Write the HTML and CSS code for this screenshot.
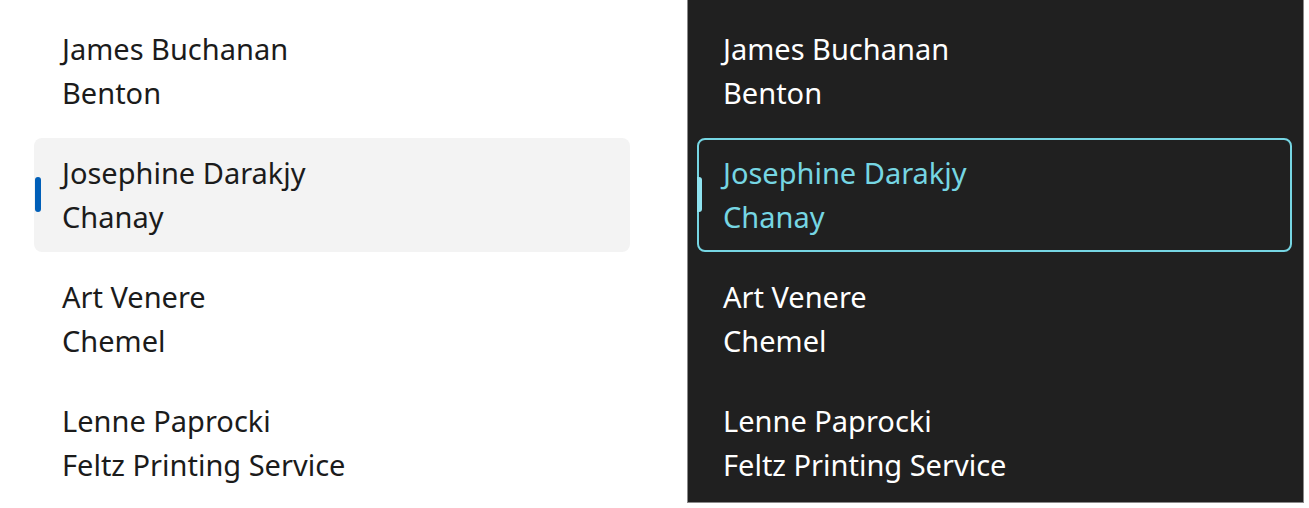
FILE: index.html
```html
<!DOCTYPE html>
<html>
<head>
<meta charset="utf-8">
<link rel="stylesheet" href="styles.css">
</head>
<body>
<div class="page">
  <div class="panel light">
    <div class="item"><div class="line">James Buchanan</div><div class="line">Benton</div></div>
    <div class="item selected"><span class="bar"></span><div class="line">Josephine Darakjy</div><div class="line">Chanay</div></div>
    <div class="item"><div class="line">Art Venere</div><div class="line">Chemel</div></div>
    <div class="item"><div class="line">Lenne Paprocki</div><div class="line">Feltz Printing Service</div></div>
  </div>
  <div class="panel dark">
    <div class="item"><div class="line">James Buchanan</div><div class="line">Benton</div></div>
    <div class="item selected"><span class="bar"></span><div class="line">Josephine Darakjy</div><div class="line">Chanay</div></div>
    <div class="item"><div class="line">Art Venere</div><div class="line">Chemel</div></div>
    <div class="item"><div class="line">Lenne Paprocki</div><div class="line">Feltz Printing Service</div></div>
  </div>
</div>
</body>
</html>
```
FILE: styles.css
```css
html, body {
  margin: 0;
  padding: 0;
  background: #ffffff;
}
.page {
  display: flex;
  font-family: "Noto Sans", "Open Sans", sans-serif;
  font-size: 29px;
}
.panel {
  display: flex;
  flex-direction: column;
  gap: 10px;
  padding-top: 14px;
  box-sizing: border-box;
}
.light {
  width: 687px;
  padding-left: 34px;
  padding-right: 57px;
  color: #1b1b1b;
}
.dark {
  width: 617px;
  height: 503px;
  background: #202020;
  color: #ffffff;
  border: 1px solid #8a8a8a;
  border-top: none;
  padding-left: 9px;
  padding-right: 11px;
}
.item {
  position: relative;
  height: 114px;
  box-sizing: border-box;
  padding: 13px 0 13px 28px;
  border-radius: 8px;
}
.dark .item {
  padding-left: 26px;
}
.line {
  line-height: 44px;
  height: 44px;
  white-space: nowrap;
}
.light .selected {
  background: #f3f3f3;
}
.dark .selected {
  border: 2px solid #76d6e3;
  padding: 11px 0 11px 24px;
  color: #76d6e3;
}
.bar {
  position: absolute;
  left: 1px;
  top: 39px;
  width: 6px;
  height: 35px;
  border-radius: 3px;
  background: #005fb8;
}
.dark .bar {
  left: -2px;
  top: 37px;
  width: 5px;
  background: #8fe3f0;
  border-radius: 0 3px 3px 0;
}
```
